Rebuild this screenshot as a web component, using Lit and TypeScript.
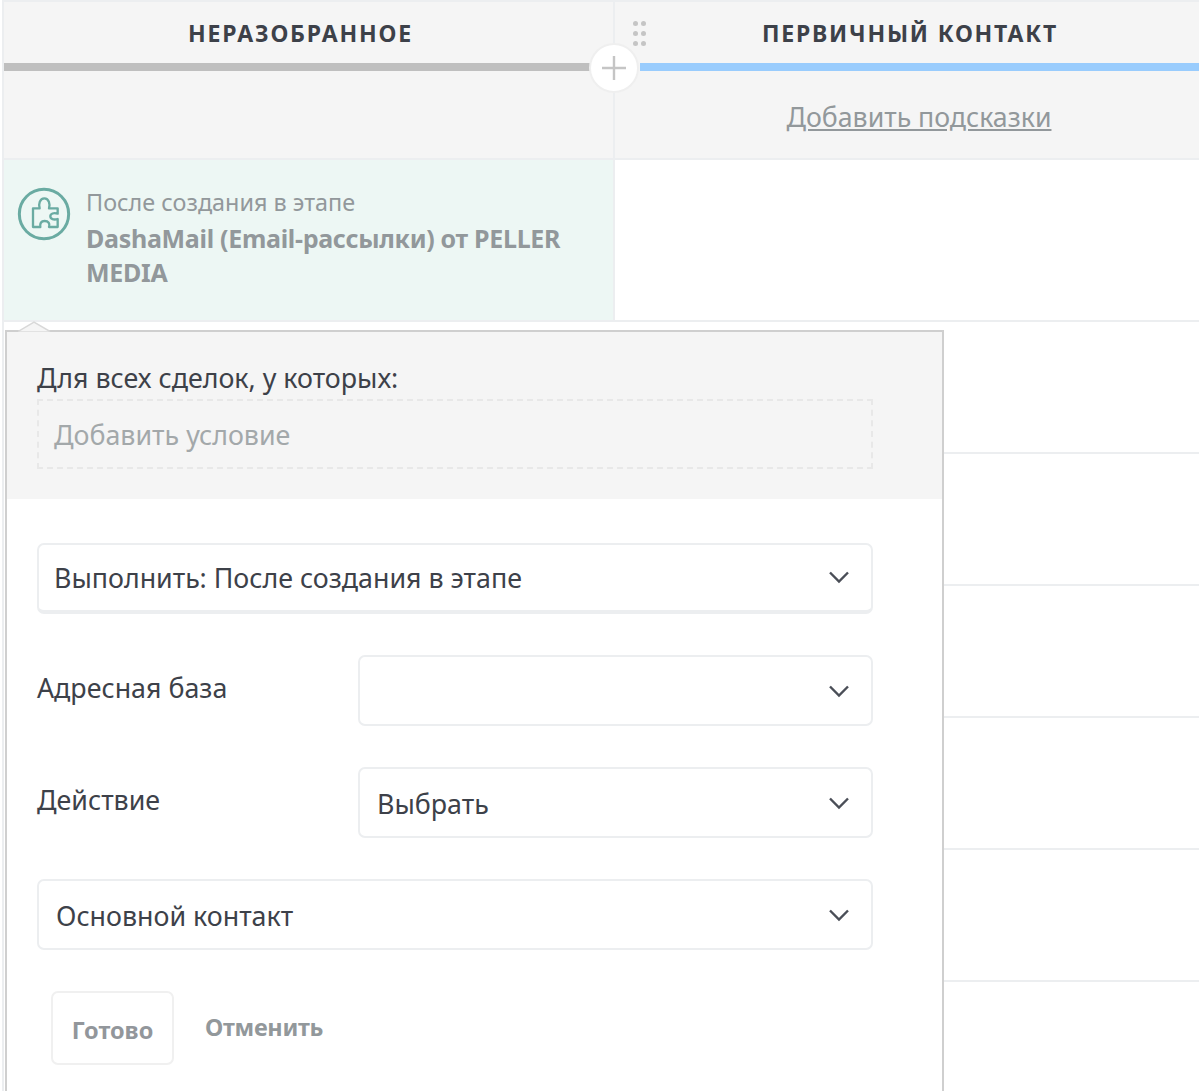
import { LitElement, html, css, svg } from "lit";
import { customElement } from "lit/decorators.js";

const chevron = html`<svg class="chev" width="22" height="14" viewBox="0 0 22 14">
  <path d="M2 2.5 L11 11.5 L20 2.5" fill="none" stroke="#4a4e57" stroke-width="2.4" />
</svg>`;

const puzzle = svg`
  <circle cx="117" cy="117" r="74" fill="none" stroke="#6aaba2" stroke-width="9" />
  <path d="M84 100 H104 C100 88 104 70 118 70 C132 70 136 88 132 100 H158 V116 C146 112 136 116 136 124 C136 132 146 136 158 132 V156 H132 C136 146 130 138 119 138 C108 138 104 146 106 156 H84 Z"
    fill="none" stroke="#6aaba2" stroke-width="7" stroke-linejoin="round" />
`;

@customElement("app-root")
export class AppRoot extends LitElement {
  static styles = css`
    :host {
      display: block;
      width: 1199px;
      height: 1091px;
      overflow: hidden;
      position: relative;
      background: #fff;
      font-family: "Noto Sans", sans-serif;
      color: #3d4149;
      box-sizing: border-box;
    }
    .board {
      display: grid;
      grid-template-columns: 611px 1fr;
      margin-left: 4px;
      box-shadow: -2px 0 0 #eceef0;
    }
    .col-head {
      height: 160px;
      box-sizing: border-box;
      background: #f5f5f5;
      border-top: 2px solid #eceef0;
      border-bottom: 2px solid #eceef0;
    }
    .col-head.first {
      border-right: 2px solid #eceef0;
    }
    .title {
      height: 61px;
      display: flex;
      align-items: center;
      justify-content: center;
      font-size: 23px;
      font-weight: 700;
      letter-spacing: 1.8px;
      padding-right: 16px;
      box-sizing: border-box;
    }
    .second .title {
      padding-right: 0;
      padding-left: 6px;
    }
    .bar {
      height: 8px;
    }
    .first .bar {
      background: #bfbfbf;
      margin-right: 22px;
    }
    .second .bar {
      background: #99ccfd;
      margin-left: 25px;
    }
    .hint {
      display: flex;
      justify-content: center;
      margin-top: 28px;
      font-size: 26.7px;
      line-height: 36px;
      color: #92989b;
      text-decoration: underline;
      padding-left: 24px;
    }
    .left-col {
      display: flex;
      flex-direction: column;
    }
    .cell {
      height: 162px;
      box-sizing: border-box;
      background: #edf7f4;
      border-right: 2px solid #eceef0;
      border-bottom: 2px solid #eceef0;
      display: flex;
      gap: 15px;
      padding: 27px 30px 0 13px;
    }
    .cell svg {
      flex: none;
    }
    .cell-text {
      margin-top: -1px;
      color: #92989b;
    }
    .cell-sub {
      font-size: 23.4px;
      line-height: 32px;
    }
    .cell-name {
      font-size: 25px;
      letter-spacing: -0.3px;
      line-height: 34px;
      font-weight: 700;
      margin-top: 3px;
    }
    .row {
      height: 132px;
      box-sizing: border-box;
      border-bottom: 2px solid #eceef0;
    }
    .row.tall {
      height: 162px;
    }
    .add {
      position: absolute;
      left: 589px;
      top: 43px;
      width: 50px;
      height: 50px;
      border-radius: 50%;
      background: #fff;
      border: 2px solid #efefef;
      box-sizing: border-box;
      display: flex;
      align-items: center;
      justify-content: center;
    }
    .grip {
      position: absolute;
      left: 633px;
      top: 21px;
      display: grid;
      grid-template-columns: 5px 5px;
      gap: 5px 3px;
    }
    .grip span {
      width: 5px;
      height: 5px;
      border-radius: 50%;
      background: #c5c5c5;
    }
    .popover {
      position: absolute;
      left: 5px;
      top: 330px;
      width: 939px;
      height: 800px;
      box-sizing: border-box;
      background: #fff;
      border: 2px solid #cfcfcf;
    }
    .notch {
      position: absolute;
      left: 11px;
      top: -11px;
    }
    .pop-head {
      background: #f5f5f5;
      height: 167px;
      box-sizing: border-box;
      padding: 29px 69px 0 30px;
    }
    .pop-label {
      font-size: 26.8px;
      line-height: 34px;
      margin-bottom: 4px;
    }
    .cond {
      height: 70px;
      box-sizing: border-box;
      border: 2px dashed #e8e8e8;
      display: flex;
      align-items: center;
      padding-left: 15px;
      font-size: 26.8px;
      color: #a3a8aa;
    }
    .form {
      padding: 44px 69px 0 30px;
      display: flex;
      flex-direction: column;
      gap: 41px;
    }
    .select {
      height: 71px;
      box-sizing: border-box;
      border: 2px solid #eceef0;
      border-radius: 7px;
      display: flex;
      align-items: center;
      padding: 0 21px 0 15px;
      font-size: 26.8px;
      background: #fff;
    }
    .select .chev {
      margin-left: auto;
    }
    .select.raised {
      border-bottom-width: 4px;
    }
    .select.raised .chev {
      margin-top: -2px;
    }
    .field {
      display: grid;
      grid-template-columns: 321px 1fr;
    }
    .field label {
      font-size: 26.8px;
      line-height: 36px;
      padding-top: 15px;
    }
    .field .select {
      padding-left: 17px;
    }
    .select.wide-pad {
      padding-left: 17px;
    }
    .field .select span,
    .select.wide-pad span {
      padding-top: 2px;
    }
    .actions {
      display: flex;
      align-items: center;
      gap: 31px;
      padding-left: 14px;
    }
    .done {
      width: 123px;
      height: 74px;
      box-sizing: border-box;
      border: 2px solid #f0f0f0;
      border-radius: 7px;
      padding-top: 3px;
      display: flex;
      align-items: center;
      justify-content: center;
      font-size: 23.5px;
      font-weight: 700;
      color: #92969b;
    }
    .cancel {
      font-size: 23.5px;
      letter-spacing: -0.3px;
      font-weight: 700;
      color: #92989b;
      margin-top: -2px;
    }
  `;

  render() {
    return html`
      <div class="board">
        <div class="col-head first">
          <div class="title">НЕРАЗОБРАННОЕ</div>
          <div class="bar"></div>
        </div>
        <div class="col-head second">
          <div class="title">ПЕРВИЧНЫЙ КОНТАКТ</div>
          <div class="bar"></div>
          <div class="hint">Добавить подсказки</div>
        </div>
        <div class="left-col">
          <div class="cell">
            <svg width="54" height="54" viewBox="36 36 162 162">${puzzle}</svg>
            <div class="cell-text">
              <div class="cell-sub">После создания в этапе</div>
              <div class="cell-name">DashaMail (Email-рассылки) от PELLER MEDIA</div>
            </div>
          </div>
        </div>
        <div class="right-col">
          <div class="row tall"></div>
          <div class="row"></div>
          <div class="row"></div>
          <div class="row"></div>
          <div class="row"></div>
          <div class="row"></div>
          <div class="row"></div>
        </div>
      </div>

      <div class="grip">
        <span></span><span></span><span></span><span></span><span></span><span></span>
      </div>
      <div class="add">
        <svg width="24" height="24" viewBox="0 0 24 24">
          <path d="M12 0 V24 M0 12 H24" stroke="#c5c5c5" stroke-width="2.4" fill="none" />
        </svg>
      </div>

      <div class="popover">
        <svg class="notch" width="34" height="11" viewBox="0 0 34 11">
          <path d="M0 10.5 L16 1 L32 10.5" fill="#f5f5f5" stroke="#d8d8d8" stroke-width="1.5" />
        </svg>
        <div class="pop-head">
          <div class="pop-label">Для всех сделок, у которых:</div>
          <div class="cond">Добавить условие</div>
        </div>
        <div class="form">
          <div class="select raised"><span>Выполнить: После создания в этапе</span>${chevron}</div>
          <div class="field">
            <label>Адресная база</label>
            <div class="select">${chevron}</div>
          </div>
          <div class="field">
            <label>Действие</label>
            <div class="select"><span>Выбрать</span>${chevron}</div>
          </div>
          <div class="select wide-pad"><span>Основной контакт</span>${chevron}</div>
          <div class="actions">
            <div class="done">Готово</div>
            <div class="cancel">Отменить</div>
          </div>
        </div>
      </div>
    `;
  }
}
